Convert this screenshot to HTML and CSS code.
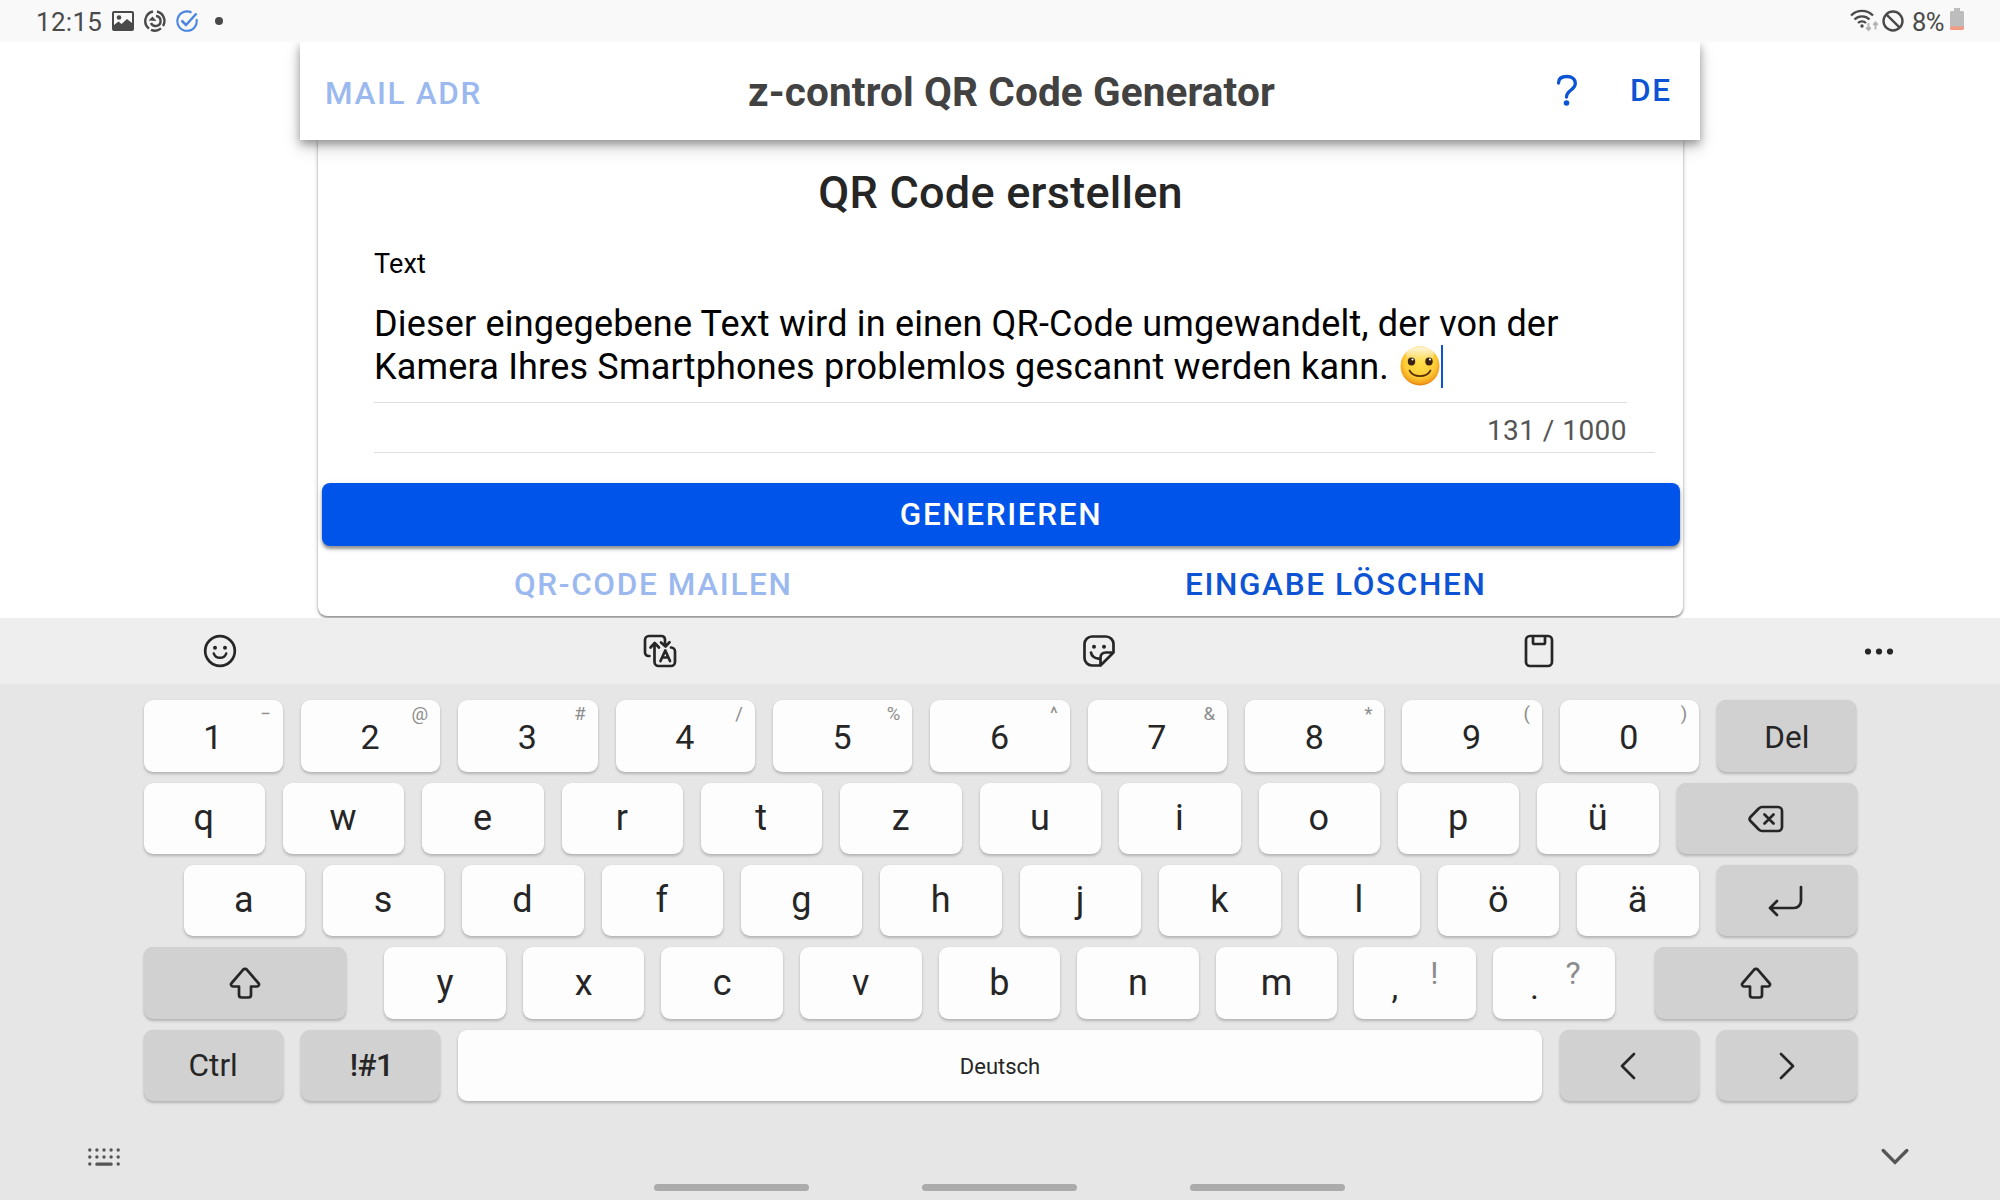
FILE: index.html
```html
<!DOCTYPE html>
<html lang="de">
<head>
<meta charset="utf-8">
<title>z-control QR Code Generator</title>
<link rel="stylesheet" href="styles.css">
</head>
<body>
<div class="status">
  <div class="status-left">
    <span class="clock">12:15</span>
    <svg class="st-img" width="22" height="20" viewBox="0 0 22 20"><path fill="#4a4a4a" fill-rule="evenodd" d="M2 0h18a2 2 0 0 1 2 2v16a2 2 0 0 1-2 2H2a2 2 0 0 1-2-2V2a2 2 0 0 1 2-2zM2 2v12l4.500-3.500 3 2.500 5.500-5 5 4V2z"/><circle cx="7" cy="6.500" r="2.300" fill="#4a4a4a"/></svg>
    <svg class="st-sync" width="22" height="22" viewBox="0 0 22 22" fill="none" stroke="#4a4a4a" stroke-width="2.400"><path d="M9 1.500A9.700 9.700 0 0 0 5 18.600M7 19.800a9.700 9.700 0 0 0 10-1.400M19 16A9.700 9.700 0 0 0 13 1.500"/><path d="M12 6a5 5 0 1 1-5 7"/><path fill="#4a4a4a" stroke="none" d="M4.500 10.500 8.500 6.500l4 4.500z"/></svg>
    <svg class="st-check" width="22" height="22" viewBox="0 0 22 22" fill="none" stroke="#4a86e0" stroke-width="2.100"><path d="M15.500 2.500A9.700 9.700 0 1 0 20.500 9"/><path d="M5.500 10.500l4.500 4.500L20.500 3.500" stroke-width="2.500"/></svg>
    <span class="st-dot"></span>
  </div>
  <div class="status-right">
    <svg class="st-wifi" width="29" height="24" viewBox="0 0 29 24" fill="none" stroke="#4a4a4a" stroke-width="2.300"><path d="M1 7.500a15.500 15.500 0 0 1 22 0M4.500 11.500a10.500 10.500 0 0 1 15 0M8 15a6 6 0 0 1 8 0"/><circle cx="12" cy="18" r="1.700" fill="#4a4a4a" stroke="none"/><path stroke="#b4b4b4" stroke-width="1.900" d="M18.500 15v7M16.300 19.500l2.200 2.500 2.200-2.500M25.500 21.500v-7M23.300 17l2.200-2.500 2.200 2.500"/></svg>
    <svg class="st-no" width="22" height="22" viewBox="0 0 22 22" fill="none" stroke="#4a4a4a" stroke-width="2.400"><circle cx="11" cy="11" r="9.500"/><path d="M4.300 4.300l13.400 13.400"/></svg>
    <span class="percent">8%</span>
    <svg class="st-bat" width="14" height="22" viewBox="0 0 14 22"><path fill="#bdbdbd" d="M4 0h6v3h3l1 1v15H0V4l1-1h3z"/><path fill="#f29b82" d="M0 18.500h14V21l-1 1H1l-1-1z"/></svg>
  </div>
</div>

<main class="page">
  <header class="topbar">
    <span class="btn-text faded mail">MAIL ADR</span>
    <h1>z-control QR Code Generator</h1>
    <svg class="help" width="22" height="34" viewBox="0 0 22 34" fill="none" stroke="#0c54d4" stroke-width="3.300" stroke-linecap="round"><path d="M2.500 9C2.500 4.500 6 2.500 10.800 2.500c5 0 8.500 2.600 8.500 7 0 6.500-8.800 6.500-8.800 13.500"/><circle cx="10.500" cy="29" r="2.800" fill="#0c54d4" stroke="none"/></svg>
    <span class="btn-text lang">DE</span>
  </header>
  <section class="card">
    <h2>QR Code erstellen</h2>
    <div class="field">
      <div class="label">Text</div>
      <p class="text">Dieser eingegebene Text wird in einen QR-Code umgewandelt, der von der<br>Kamera Ihres Smartphones problemlos gescannt werden kann. <svg class="smile" width="40" height="40" viewBox="0 0 40 40"><defs><radialGradient id="face" cx=".5" cy=".4" r=".62"><stop offset="0" stop-color="#ffe14a"/><stop offset=".65" stop-color="#fdcb35"/><stop offset=".88" stop-color="#f3a01c"/><stop offset="1" stop-color="#d9690c"/></radialGradient><linearGradient id="shine" x2="0" y2="1"><stop offset="0" stop-color="#fff" stop-opacity=".85"/><stop offset="1" stop-color="#fff" stop-opacity="0"/></linearGradient></defs><circle cx="20" cy="20" r="19.500" fill="url(#face)"/><ellipse cx="20" cy="8.500" rx="14" ry="7.500" fill="url(#shine)"/><ellipse cx="11.500" cy="15.500" rx="3.700" ry="4" fill="#3a2410"/><ellipse cx="29" cy="15.500" rx="3.700" ry="4" fill="#3a2410"/><circle cx="12.500" cy="13.500" r="1.100" fill="#fff"/><circle cx="30" cy="13.500" r="1.100" fill="#fff"/><path d="M9.500 24.500c4 7.500 17 7.500 21 0" fill="none" stroke="#5a3208" stroke-width="1.700" stroke-linecap="round"/></svg><span class="caret"></span></p>
      <div class="counter">131 / 1000</div>
    </div>
    <div class="primary btn-text">GENERIEREN</div>
    <div class="actions"><span class="btn-text faded">QR-CODE MAILEN</span><span class="btn-text">EINGABE LÖSCHEN</span></div>
  </section>
</main>

<div class="tools">
  <svg width="34" height="34" viewBox="0 0 34 34"><circle cx="17" cy="17" r="14.800"/><path d="M10.800 19.500c1.800 5.800 10.600 5.800 12.400 0" stroke-width="2.500"/><g class="solid"><circle cx="12" cy="13.700" r="2"/><circle cx="22" cy="13.700" r="2"/></g></svg>
  <svg width="34" height="34" viewBox="0 0 34 34"><path d="M6.500 22H5.500a3.500 3.500 0 0 1-3.500-3.500V6a4 4 0 0 1 4-4h12.500a3.500 3.500 0 0 1 3.500 3.500V12M18 8.500l4.500 4 4-4.200M11.500 9.500V28a4 4 0 0 0 4 4H28a4 4 0 0 0 4-4V17.500a4 4 0 0 0-4-4M7.500 13.500l4.200-4.500 4.300 4.500M17.500 27l4.800-10.500L27 27M19.500 23.500h5.500" stroke-width="2.700"/></svg>
  <svg width="34" height="34" viewBox="0 0 34 34"><path d="M18 31.500H10a7.500 7.500 0 0 1-7.500-7.500V10A7.500 7.500 0 0 1 10 2.500h14A7.500 7.500 0 0 1 31.500 10v8.500L18.500 31.500V24c0-3.500 2-5.500 5.500-5.500h7.500M9 18.500c.5 3.500 4 6.500 8.500 6"/><g class="solid"><circle cx="12" cy="12.700" r="2"/><circle cx="22" cy="12.700" r="2"/></g></svg>
  <svg width="34" height="34" viewBox="0 0 34 34"><rect x="4" y="2" width="26" height="30" rx="4"/><path d="M11 2.500v6a1.500 1.500 0 0 0 1.500 1.500h9A1.500 1.500 0 0 0 23 8.500v-6" /></svg>
  <svg class="more" width="34" height="34" viewBox="0 0 34 34"><g class="solid"><circle cx="6" cy="17.500" r="3.100"/><circle cx="17" cy="17.500" r="3.100"/><circle cx="28" cy="17.500" r="3.100"/></g></svg>
</div>

<div class="keyboard">
  <div class="row digits">
    <div class="key">1<i>−</i></div><div class="key">2<i>@</i></div><div class="key">3<i>#</i></div><div class="key">4<i>/</i></div><div class="key">5<i>%</i></div><div class="key">6<i>^</i></div><div class="key">7<i>&amp;</i></div><div class="key">8<i>*</i></div><div class="key">9<i>(</i></div><div class="key">0<i>)</i></div><div class="key fn">Del</div>
  </div>
  <div class="row letters">
    <div class="key">q</div><div class="key">w</div><div class="key">e</div><div class="key">r</div><div class="key">t</div><div class="key">z</div><div class="key">u</div><div class="key">i</div><div class="key">o</div><div class="key">p</div><div class="key">ü</div>
    <div class="key fn rest"><svg width="36" height="28" viewBox="0 0 36 28"><path d="M14 2h16a4 4 0 0 1 4 4v16a4 4 0 0 1-4 4H14a4 4 0 0 1-3-1.300L2.500 16a3 3 0 0 1 0-4L11 3.300A4 4 0 0 1 14 2zM16.500 9.500l9 9M25.500 9.500l-9 9"/></svg></div>
  </div>
  <div class="row letters home">
    <div class="key">a</div><div class="key">s</div><div class="key">d</div><div class="key">f</div><div class="key">g</div><div class="key">h</div><div class="key">j</div><div class="key">k</div><div class="key">l</div><div class="key">ö</div><div class="key">ä</div>
    <div class="key fn rest"><svg width="36" height="32" viewBox="0 0 36 32"><path d="M33 2v14a7 7 0 0 1-7 7H3M9 16l-7 7 7 7"/></svg></div>
  </div>
  <div class="row shift-row">
    <div class="key fn shift"><svg width="32" height="32" viewBox="0 0 32 32"><path d="M14 2.800a2.800 2.800 0 0 1 4 0L29.300 16a2 2 0 0 1-1.500 3.500H22V28a2.500 2.500 0 0 1-2.500 2.500h-7A2.500 2.500 0 0 1 10 28v-8.500H4.200A2 2 0 0 1 2.700 16z"/></svg></div>
    <div class="key">y</div><div class="key">x</div><div class="key">c</div><div class="key">v</div><div class="key">b</div><div class="key">n</div><div class="key">m</div><div class="key punct"><b>,</b><i>!</i></div><div class="key punct"><b>.</b><i>?</i></div>
    <div class="key fn shift"><svg width="32" height="32" viewBox="0 0 32 32"><path d="M14 2.800a2.800 2.800 0 0 1 4 0L29.300 16a2 2 0 0 1-1.500 3.500H22V28a2.500 2.500 0 0 1-2.500 2.500h-7A2.500 2.500 0 0 1 10 28v-8.500H4.200A2 2 0 0 1 2.700 16z"/></svg></div>
  </div>
  <div class="row bottom">
    <div class="key fn">Ctrl</div><div class="key fn sym">!#1</div><div class="key space">Deutsch</div>
    <div class="key fn"><svg class="left" width="16" height="28" viewBox="0 0 16 28"><path d="M14 2 2 14l12 12"/></svg></div>
    <div class="key fn"><svg width="16" height="28" viewBox="0 0 16 28"><path d="M2 2l12 12L2 26"/></svg></div>
  </div>
  <div class="foot">
    <svg width="32" height="18" viewBox="0 0 32 18" fill="#555"><circle cx="1.800" cy="2" r="1.700"/><circle cx="8.900" cy="2" r="1.700"/><circle cx="16" cy="2" r="1.700"/><circle cx="23.100" cy="2" r="1.700"/><circle cx="30.200" cy="2" r="1.700"/><circle cx="1.800" cy="9" r="1.700"/><circle cx="8.900" cy="9" r="1.700"/><circle cx="16" cy="9" r="1.700"/><circle cx="23.100" cy="9" r="1.700"/><circle cx="30.200" cy="9" r="1.700"/><circle cx="1.800" cy="16" r="1.700"/><rect x="7.300" y="14.400" width="17.400" height="3.300" rx="1.500"/><circle cx="30.200" cy="16" r="1.700"/></svg>
    <svg width="28" height="18" viewBox="0 0 28 18" fill="none" stroke="#555" stroke-width="3.300" stroke-linecap="round"><path d="M2.200 2.500 14 14.500 25.800 2.500"/></svg>
  </div>
  <div class="nav"><span></span><span></span><span></span></div>
</div>
</body>
</html>
```
FILE: styles.css
```css
* { box-sizing: border-box; }
body {
  margin: 0;
  width: 2000px;
  height: 1200px;
  overflow: hidden;
  display: flex;
  flex-direction: column;
  background: #fff;
  font-family: Roboto, sans-serif;
  color: #262626;
}
h1, h2, p { margin: 0; }
svg { display: block; flex: none; }

/* status bar */
.status {
  flex: none;
  height: 42px;
  padding: 0 36px;
  display: flex;
  justify-content: space-between;
  background: #f9f9f9;
  color: #4a4a4a;
  font-size: 26px;
  line-height: 44px;
  position: relative;
  z-index: 2;
}
.status-left, .status-right { display: flex; align-items: flex-start; }
.clock { width: 76px; letter-spacing: 0.3px; }
.st-img { margin-top: 11px; }
.st-sync { margin: 10px 0 0 10px; }
.st-check { margin: 10px 0 0 10px; }
.st-dot { width: 8px; height: 8px; border-radius: 50%; background: #4a4a4a; margin: 17px 0 0 17px; }
.st-wifi { margin-top: 8px; }
.st-no { margin: 10px 0 0 3px; }
.percent { width: 38px; margin-left: 8px; font-weight: 400; font-size: 25.500px; letter-spacing: -0.5px; }
.st-bat { margin-top: 8px; }

/* page */
.page {
  flex: none;
  width: 1400px;
  height: 576px;
  margin: 0 auto;
}
.topbar {
  height: 98px;
  display: flex;
  align-items: flex-start;
  padding-left: 25px;
  background: #fff;
  box-shadow: 0 4px 9px rgba(0,0,0,.36), 0 8px 18px rgba(0,0,0,.14);
  position: relative;
  z-index: 1;
}
.btn-text {
  font-size: 31.5px;
  font-weight: 500;
  letter-spacing: 1.65px;
  line-height: 36px;
  color: #0c54d4;
  white-space: nowrap;
}
.faded { color: #9bb9ef; }
.mail { width: 423px; margin-top: 34px; }
.topbar h1 {
  width: 808px;
  margin-top: 25px;
  font-size: 40.5px;
  letter-spacing: 0.12px;
  line-height: 50px;
  font-weight: 700;
  color: #424242;
  white-space: nowrap;
}
.help { margin-top: 32px; }
.lang { margin: 31px 0 0 52px; }
.card {
  margin: 0 17px 0 18px;
  height: 476px;
  padding-top: 32px;
  background: #fff;
  border-radius: 0 0 9px 9px;
  box-shadow: 0 2px 2px rgba(0,0,0,.35), 0 0 5px rgba(0,0,0,.2);
}
.card h2 {
  margin-top: -2px;
  text-align: center;
  font-size: 45px;
  letter-spacing: 0.25px;
  line-height: 45px;
  font-weight: 500;
}
.field {
  margin: 34px 28px 0 56px;
  height: 204px;
  border-bottom: 1px solid #dedede;
  color: #000;
}
.label { font-size: 27px; letter-spacing: 0.2px; line-height: 30px; }
.text {
  height: 124px;
  margin: 0 28px 0 0;
  padding-top: 24px;
  font-size: 36px;
  letter-spacing: 0.185px;
  line-height: 43px;
  white-space: nowrap;
  border-bottom: 1px solid #dedede;
}
.smile { display: inline-block; vertical-align: -7px; margin: -6px 0 0 2px; }
.caret { display: inline-block; width: 2px; height: 43px; vertical-align: -9px; margin: -9px 0 0 1px; background: #0c54d4; }
.counter {
  margin: 13px 28px 0 0;
  text-align: right;
  font-size: 28px;
  line-height: 30px;
  letter-spacing: 0.45px;
  color: #555;
}
.primary {
  margin: 30px 3px 0 4px;
  height: 63px;
  border-radius: 8px;
  background: #0054e9;
  color: #fff;
  line-height: 63px;
  text-align: center;
  box-shadow: 0 3px 3px rgba(0,0,0,.35), 0 2px 7px rgba(0,0,0,.15);
}
.actions { display: grid; grid-template-columns: 1fr 1fr; margin: 21px 6px 0 -6px; text-align: center; }

/* keyboard */
.tools {
  flex: none;
  height: 66px;
  padding: 0 104px 0 203px;
  display: flex;
  align-items: center;
  background: #eee;
  position: relative;
  z-index: 2;
}
.tools svg { margin-right: 405.600px; fill: none; stroke: #262626; stroke-width: 2.700; stroke-linecap: round; stroke-linejoin: round; }
.tools svg:nth-child(4) { margin-right: 306px; }
.tools svg.more { margin-right: 0; }
.tools .solid { fill: #262626; stroke: none; }
.keyboard { flex: 1; background: #e6e6e6; padding-top: 16px; }
.row { display: flex; width: 1713px; height: 71px; margin: 0 auto 11px; gap: 18px; }
.key {
  flex: none;
  width: 139.360px;
  border-radius: 9px;
  background: #fdfdfd;
  box-shadow: 0 2px 3px rgba(0,0,0,.22), 0 0 1px rgba(0,0,0,.1);
  display: flex;
  align-items: center;
  justify-content: center;
  font-size: 36px;
  position: relative;
}
.key i { position: absolute; right: 12px; top: 3px; font-size: 18.500px; line-height: 22px; font-style: normal; color: #8c8c8c; }
.key svg { fill: none; stroke: #262626; stroke-width: 2.700; stroke-linecap: round; stroke-linejoin: round; }
.fn { background: #d1d1d1; font-size: 31.500px; }
.digits { height: 72px; }
.digits .key { padding-top: 2px; }
.digits .key:not(.fn) { font-size: 34px; padding: 1px 1px 0 0; }
.letters .key { width: 121.400px; padding-bottom: 2px; padding-right: 1px; }
.letters .key.rest { width: auto; flex: 1; padding-bottom: 0; }
.home { padding-left: 40px; }
.shift-row { height: 72px; gap: 17.100px; }
.shift-row .key { width: 121.500px; }
.shift-row .shift { width: 202px; }
.shift:first-child { margin-right: 21.700px; }
.shift:last-child { margin-left: auto; }
.punct b { position: absolute; left: 37px; top: 22px; font-weight: 400; font-size: 34px; line-height: 36px; }
.punct i { left: 60px; right: auto; width: 40px; text-align: center; top: 8px; font-size: 32px; line-height: 36px; font-weight: 400; }
.bottom { margin-bottom: 0; }
.bottom .space { flex: 1; width: auto; font-size: 22px; padding-top: 1px; }
.bottom .sym { font-weight: 500; letter-spacing: -0.5px; padding-left: 2px; }
.left { margin-right: 3px; }
.foot { display: flex; justify-content: space-between; align-items: center; height: 18px; margin: 47px 91px 0 88px; }
.nav { display: flex; justify-content: center; gap: 113px; margin: 18px 1px 0 0; }
.nav span { width: 155px; height: 7px; border-radius: 4px; background: #ababab; }
```
